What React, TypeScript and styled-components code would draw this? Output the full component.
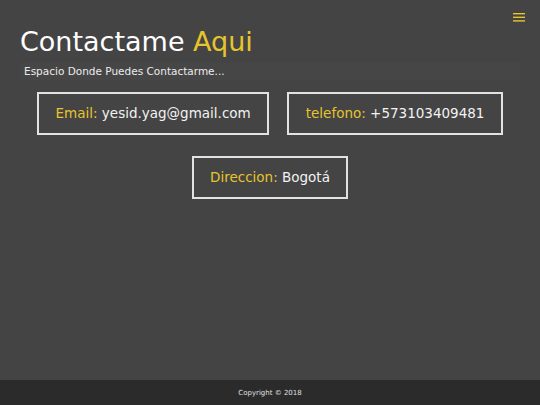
import React from 'react'
import styled, { createGlobalStyle } from 'styled-components'

const GlobalStyle = createGlobalStyle`
  html, body {
    margin: 0;
    padding: 0;
    background-color: #444444;
  }
  #root {
    min-height: 100vh;
  }
`

const Page = styled.div`
  min-height: 100vh;
  display: flex;
  flex-direction: column;
  background-color: #444444;
  font-family: "DejaVu Sans", Verdana, sans-serif;
  color: #f2f2f2;
`

const TopBar = styled.div`
  display: flex;
  justify-content: flex-end;
  padding: 13px 15px 0 0;
  height: 13px;
`

const MenuButton = styled.button`
  background: none;
  border: none;
  padding: 0;
  cursor: pointer;
  display: flex;
`

const Header = styled.header`
  padding: 0 20px;
`

const Title = styled.h1`
  margin: 0;
  font-size: 27px;
  font-weight: normal;
  line-height: 32px;
  color: #ffffff;
`

const Highlight = styled.span`
  color: #e6c52c;
`

const Subtitle = styled.p`
  margin: 5px 0 0;
  padding: 2px 4px;
  font-size: 10.5px;
  line-height: 13px;
  color: #ececec;
  background-color: #464646;
`

const Main = styled.main`
  flex: 1;
  display: flex;
  flex-direction: column;
  align-items: center;
  gap: 21px;
  padding-top: 12px;
`

const Row = styled.div`
  display: flex;
  justify-content: center;
  gap: 18px;
`

const InfoCard = styled.div`
  border: 2px solid #e2e2e2;
  padding: 12px 16.5px;
  font-size: 13.5px;
  line-height: 15px;
  color: #f2f2f2;
  white-space: nowrap;
`

const Label = styled.span`
  color: #e6c52c;
`

const Footer = styled.footer`
  height: 25px;
  background-color: #2b2b2b;
  display: flex;
  align-items: center;
  justify-content: center;
  font-size: 7px;
  color: #e0e0e0;
`

function MenuIcon() {
  return (
    <svg width="12" height="9" viewBox="0 0 12 9">
      <rect x="0" y="0" width="12" height="1.4" fill="#e6c52c" />
      <rect x="0" y="3.6" width="12" height="1.4" fill="#e6c52c" />
      <rect x="0" y="7.2" width="12" height="1.4" fill="#e6c52c" />
    </svg>
  )
}

const contacts = [
  [
    { label: 'Email:', value: 'yesid.yag@gmail.com' },
    { label: 'telefono:', value: '+573103409481' },
  ],
  [{ label: 'Direccion:', value: 'Bogotá' }],
]

export default function App() {
  return (
    <Page>
      <GlobalStyle />
      <TopBar>
        <MenuButton aria-label="menu">
          <MenuIcon />
        </MenuButton>
      </TopBar>
      <Header>
        <Title>
          Contactame <Highlight>Aqui</Highlight>
        </Title>
        <Subtitle>Espacio Donde Puedes Contactarme...</Subtitle>
      </Header>
      <Main>
        {contacts.map((row, i) => (
          <Row key={i}>
            {row.map((c) => (
              <InfoCard key={c.label}>
                <Label>{c.label}</Label> {c.value}
              </InfoCard>
            ))}
          </Row>
        ))}
      </Main>
      <Footer>Copyright © 2018</Footer>
    </Page>
  )
}
